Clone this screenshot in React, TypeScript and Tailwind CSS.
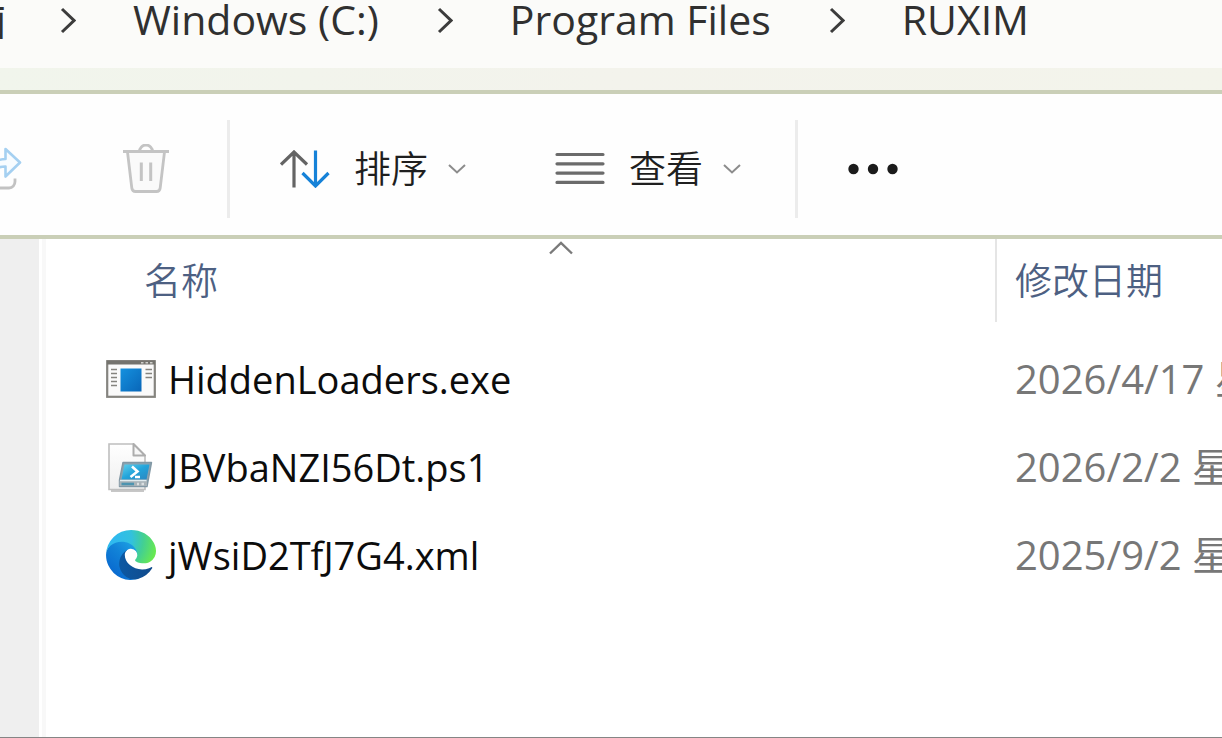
import type { ReactNode } from 'react'

/* ------------------------------------------------------------------ */
/*  Data                                                               */
/* ------------------------------------------------------------------ */

interface FileEntry {
  name: string
  modified: string
  icon: ReactNode
}

const crumbs = ['Windows (C:)', 'Program Files', 'RUXIM']

/* ------------------------------------------------------------------ */
/*  Icons                                                              */
/* ------------------------------------------------------------------ */

function CrumbChevron(): ReactNode {
  return (
    <svg width="16" height="38" viewBox="0 0 16 38" fill="none" className="shrink-0" aria-hidden="true">
      <path d="M2 9 14 20.500 2 32" stroke="#3c3c3c" strokeWidth="3" />
    </svg>
  )
}

function DropChevron(): ReactNode {
  return (
    <svg width="18" height="10" viewBox="0 0 18 10" fill="none" className="shrink-0" aria-hidden="true">
      <path d="M1 1 9 8.500 17 1" stroke="#8c8c8c" strokeWidth="2" />
    </svg>
  )
}

function ShareIcon(): ReactNode {
  return (
    <svg width="24" height="50" viewBox="0 0 24 50" fill="none" className="shrink-0" aria-hidden="true">
      <path
        d="M-3 17.500C-1 15.500 2 15 5.500 15V5L20 18.500 5.500 32.500V22.500C2 22.500-1 23-3 24.500"
        fill="#f8fcff"
        stroke="#a5d0f1"
        strokeWidth="2.600"
        strokeLinejoin="round"
      />
      <path d="M15 34.500V37.500C15 41 12.500 44 9 44H-3" stroke="#c2c2c2" strokeWidth="2.800" />
    </svg>
  )
}

function TrashIcon(): ReactNode {
  return (
    <svg width="48" height="50" viewBox="0 0 48 50" fill="none" className="shrink-0" aria-hidden="true">
      <path
        d="M5.500 8 9.800 44C10.100 46.300 11.500 47.500 13.500 47.500H34.500C36.500 47.500 37.900 46.300 38.200 44L42.500 8Z"
        fill="#fafafa"
      />
      <path
        d="M1 7.500H47M5.500 8 9.800 44C10.100 46.300 11.500 47.500 13.500 47.500H34.500C36.500 47.500 37.900 46.300 38.200 44L42.500 8"
        stroke="#c4c4c4"
        strokeWidth="2.800"
      />
      <path d="M17.500 7.500A6.200 6.200 0 0 1 30.500 7.500" stroke="#c4c4c4" strokeWidth="2.800" />
      <path d="M19.300 18.500V37M28.700 18.500V37" stroke="#c4c4c4" strokeWidth="3" />
    </svg>
  )
}

function SortIcon(): ReactNode {
  return (
    <svg width="50" height="38" viewBox="0 0 50 38" fill="none" className="shrink-0" aria-hidden="true">
      <path d="M14 37.500V2M1 14.500 14 2 27 14.500" stroke="#646464" strokeWidth="3.200" />
      <path d="M35.500 0.500V36M22.500 23 35.500 36 48.500 23" stroke="#1682d8" strokeWidth="3.200" />
    </svg>
  )
}

function LinesIcon(): ReactNode {
  return (
    <svg width="50" height="34" viewBox="0 0 50 34" fill="none" className="shrink-0" aria-hidden="true">
      <path
        d="M2 2.500H48M2 11.800H48M2 21.100H48M2 30.400H48"
        stroke="#6b6b6b"
        strokeWidth="3.200"
        strokeLinecap="round"
      />
    </svg>
  )
}

function MoreIcon(): ReactNode {
  return (
    <svg width="52" height="12" viewBox="0 0 52 12" fill="#1b1b1b" className="shrink-0" aria-hidden="true">
      <circle cx="6.500" cy="6" r="5.200" />
      <circle cx="26" cy="6" r="5.200" />
      <circle cx="45.500" cy="6" r="5.200" />
    </svg>
  )
}

function ExeIcon(): ReactNode {
  return (
    <svg width="50" height="50" viewBox="0 0 50 50" fill="none" className="shrink-0" aria-hidden="true">
      <defs>
        <linearGradient id="exe-blue" x1="0" y1="0" x2="1" y2="1">
          <stop offset="0" stopColor="#1591df" />
          <stop offset="1" stopColor="#0966b8" />
        </linearGradient>
      </defs>
      <rect x="1.200" y="7.200" width="47.600" height="35.600" fill="#fafafa" stroke="#85847f" strokeWidth="2.200" />
      <path d="M1 8.500H49" stroke="#74736e" strokeWidth="4" />
      <path d="M35 8.800H37.500M39.500 8.800H42M44 8.800H46.500" stroke="#d0d0cc" strokeWidth="1.600" />
      <path
        d="M5 15.500H11M5 19.500H11M5 23.500H11M5 27.500H11M5 31.500H11M39.500 15.500H46M39.500 19.500H46M39.500 23.500H46"
        stroke="#85847f"
        strokeWidth="1.600"
      />
      <rect x="14.500" y="14.500" width="21" height="23" fill="url(#exe-blue)" />
    </svg>
  )
}

function Ps1Icon(): ReactNode {
  return (
    <svg width="50" height="50" viewBox="0 0 50 50" fill="none" className="shrink-0" aria-hidden="true">
      <defs>
        <linearGradient id="ps-page" x1="0" y1="0" x2="0" y2="1">
          <stop offset="0" stopColor="#ffffff" />
          <stop offset="1" stopColor="#efefef" />
        </linearGradient>
        <linearGradient id="ps-screen" x1="0" y1="0" x2="1" y2="1">
          <stop offset="0" stopColor="#5fd0ec" />
          <stop offset="0.500" stopColor="#22a3da" />
          <stop offset="1" stopColor="#2c86c0" />
        </linearGradient>
      </defs>
      <path d="M5 49H38" stroke="#b4b4b4" strokeWidth="1.600" />
      <path d="M3 2H27.500L39 13.500V47.500H3Z" fill="url(#ps-page)" stroke="#bfbfbf" strokeWidth="1.600" />
      <path d="M27.500 2V13.500H39Z" fill="#f7f7f7" stroke="#adadad" strokeWidth="2" strokeLinejoin="round" />
      <path d="M17 20.500H45.500L41 44.500H13.500V38Z" fill="#8ba3b1" stroke="#8298a5" strokeWidth="1.400" strokeLinejoin="round" />
      <path d="M18.500 22.500H43.500L40.500 37.500H15.500Z" fill="url(#ps-screen)" />
      <path d="M13.500 38.500H41V44H13.500Z" fill="#a9b3b8" />
      <path d="M14 38.500H40.500" stroke="#e1ebef" strokeWidth="1.400" />
      <path d="M15.500 42H28" stroke="#4d94b0" strokeWidth="2.600" />
      <path d="M31 42H33M35.500 42H38" stroke="#dadfe1" strokeWidth="2.600" />
      <path d="M26 24.500 31.500 29.500 24.500 35M29 35H34" stroke="#ffffff" strokeWidth="2.600" />
    </svg>
  )
}

function EdgeIcon(): ReactNode {
  return (
    <svg width="50" height="50" viewBox="0 0 256 256" className="shrink-0" aria-hidden="true">
      <defs>
        <linearGradient id="edge-dark" x1="63" y1="178" x2="241" y2="178" gradientUnits="userSpaceOnUse">
          <stop offset="0" stopColor="#0c59a4" />
          <stop offset="1" stopColor="#114a8b" />
        </linearGradient>
        <linearGradient id="edge-mid" x1="157" y1="98" x2="46" y2="220" gradientUnits="userSpaceOnUse">
          <stop offset="0" stopColor="#1b9de2" />
          <stop offset="0.400" stopColor="#1284d8" />
          <stop offset="1" stopColor="#0a6cd0" />
        </linearGradient>
        <radialGradient id="edge-top" cx="26" cy="46" r="235" gradientUnits="userSpaceOnUse">
          <stop offset="0" stopColor="#2fb8f2" />
          <stop offset="0.450" stopColor="#32c1de" />
          <stop offset="0.700" stopColor="#42cf94" />
          <stop offset="1" stopColor="#68e950" />
        </radialGradient>
      </defs>
      <path
        fill="url(#edge-dark)"
        d="M231 190.500c-3.400 1.800-6.900 3.400-10.500 4.700a101.900 101.900 0 0 1-35.900 6.400c-47.300 0-88.500-32.500-88.500-74.300 0-11.700 6.400-21.900 16.400-27.300-42.800 1.800-53.800 46.400-53.800 72.500 0 74 68.100 81.400 82.800 81.400 7.900 0 19.800-2.300 27-4.600l1.300-.4a128.300 128.300 0 0 0 66.600-52.800 4 4 0 0 0-5.400-5.600z"
      />
      <path
        fill="url(#edge-mid)"
        d="M105.700 241.400A79.200 79.200 0 0 1 83 220.100 80.700 80.700 0 0 1 112.600 100c3.100-1.500 8.500-4.100 15.600-4a32.400 32.400 0 0 1 25.700 13 31.900 31.900 0 0 1 6.300 18.700c0-.2 24.500-79.600-80-79.600C36.300 48.100.2 89.800.2 126.300c-.2 19.300 4 38.400 12.100 56a128 128 0 0 0 156.400 67 75.500 75.500 0 0 1-62.800-7.900z"
      />
      <path
        fill="url(#edge-top)"
        d="M152.300 148.900c-.8 1-3.300 2.500-3.300 5.700 0 2.600 1.700 5.100 4.700 7.200 14.400 10 41.500 8.700 41.600 8.700 10.700 0 21.100-2.900 30.300-8.300A61.400 61.400 0 0 0 256 109.200c.3-22.400-8-37.300-11.300-43.900C223.500 23.900 177.700 0 128 0A128 128 0 0 0 0 126.200c.5-36.500 36.800-66 80-66 3.500 0 23.500.3 42 10 16.300 8.600 24.900 19 30.800 29.200 6.200 10.700 7.300 24.100 7.300 29.500 0 5.300-2.700 13.300-7.800 20z"
      />
    </svg>
  )
}

const files: FileEntry[] = [
  { name: 'HiddenLoaders.exe', modified: '2026/4/17 星', icon: <ExeIcon /> },
  { name: 'JBVbaNZI56Dt.ps1', modified: '2026/2/2 星', icon: <Ps1Icon /> },
  { name: 'jWsiD2TfJ7G4.xml', modified: '2025/9/2 星', icon: <EdgeIcon /> },
]

/* ------------------------------------------------------------------ */
/*  Sections                                                           */
/* ------------------------------------------------------------------ */

function AddressBar(): ReactNode {
  return (
    <nav aria-label="Breadcrumb" className="h-[68px] bg-[#fbfbf9]">
      <ol className="flex h-[38px] items-center gap-[58px] text-[41px] leading-none whitespace-nowrap text-[#303030]">
        <li className="-mr-1 flex w-[6px] shrink-0 justify-end">
          <a href="#">脑</a>
        </li>
        {crumbs.map((crumb) => (
          <li key={crumb} className="flex items-center gap-[57px]">
            <CrumbChevron />
            <a href="#">{crumb}</a>
          </li>
        ))}
      </ol>
    </nav>
  )
}

function CommandBar(): ReactNode {
  return (
    <div
      role="toolbar"
      aria-label="Commands"
      className="flex h-[149px] items-center border-y-4 border-[#cacfb7] bg-[#fefefe] pt-2 text-[37px] leading-none font-[350] whitespace-nowrap text-[#1f1f1f]"
    >
      <button type="button" aria-label="Share" disabled>
        <ShareIcon />
      </button>
      <button type="button" aria-label="Delete" disabled className="ml-[98px]">
        <TrashIcon />
      </button>
      <div className="ml-[57px] h-[98px] w-[3px] bg-[#ececec]" />
      <button type="button" className="ml-[50px] flex items-center gap-[20px]">
        <SortIcon />
        <span className="ml-1">排序</span>
        <DropChevron />
      </button>
      <button type="button" className="ml-[89px] flex items-center gap-[20px]">
        <LinesIcon />
        <span className="ml-1">查看</span>
        <DropChevron />
      </button>
      <div className="ml-[54px] h-[98px] w-[3px] bg-[#ececec]" />
      <button type="button" aria-label="More" className="ml-[49px]">
        <MoreIcon />
      </button>
    </div>
  )
}

function FileList(): ReactNode {
  return (
    <table className="w-full table-fixed border-collapse text-left whitespace-nowrap">
      <thead className="text-[37px] leading-none text-[#4d6082]">
        <tr className="h-[96px] align-top">
          <th scope="col" className="w-[951px] p-0 font-[350]">
            <div className="relative ml-[81px] flex h-[83px] items-center border-r-2 border-[#e5e5e5] pl-[17px]">
              名称
              <svg
                width="24"
                height="14"
                viewBox="0 0 24 14"
                fill="none"
                className="absolute top-0.5 left-1/2 -translate-x-1/2"
                aria-hidden="true"
              >
                <path d="M1 12.500 12 2 23 12.500" stroke="#7a7a7a" strokeWidth="2.400" />
              </svg>
            </div>
          </th>
          <th scope="col" className="overflow-hidden p-0 font-[350]">
            <div className="flex h-[83px] items-center pl-[18px]">修改日期</div>
          </th>
        </tr>
      </thead>
      <tbody className="leading-none">
        {files.map((file) => (
          <tr key={file.name} className="h-[88px]">
            <td className="p-0">
              <div className="flex items-center gap-[12px] pl-[60px] text-[38px] text-[#0c0c0c]">
                {file.icon}
                <span>{file.name}</span>
              </div>
            </td>
            <td className="overflow-hidden p-0 pl-[18px] text-[40px] text-[#777777]">{file.modified}</td>
          </tr>
        ))}
      </tbody>
    </table>
  )
}

export default function App(): ReactNode {
  return (
    <div className="flex min-h-screen flex-col overflow-hidden border-b border-[#858585] bg-white font-['Open_Sans','Noto_Sans_CJK_SC',sans-serif]">
      <AddressBar />
      <div className="h-[22px] bg-linear-to-r from-[#f1f5ec] via-[#f3f3ec] to-[#f3f4eb]" />
      <CommandBar />
      <div className="flex flex-1">
        <aside className="w-[39px] shrink-0 bg-[#efefef]" />
        <main className="ml-[3px] min-w-0 flex-1 border-l-4 border-[#f8f8f8]">
          <FileList />
        </main>
      </div>
    </div>
  )
}
